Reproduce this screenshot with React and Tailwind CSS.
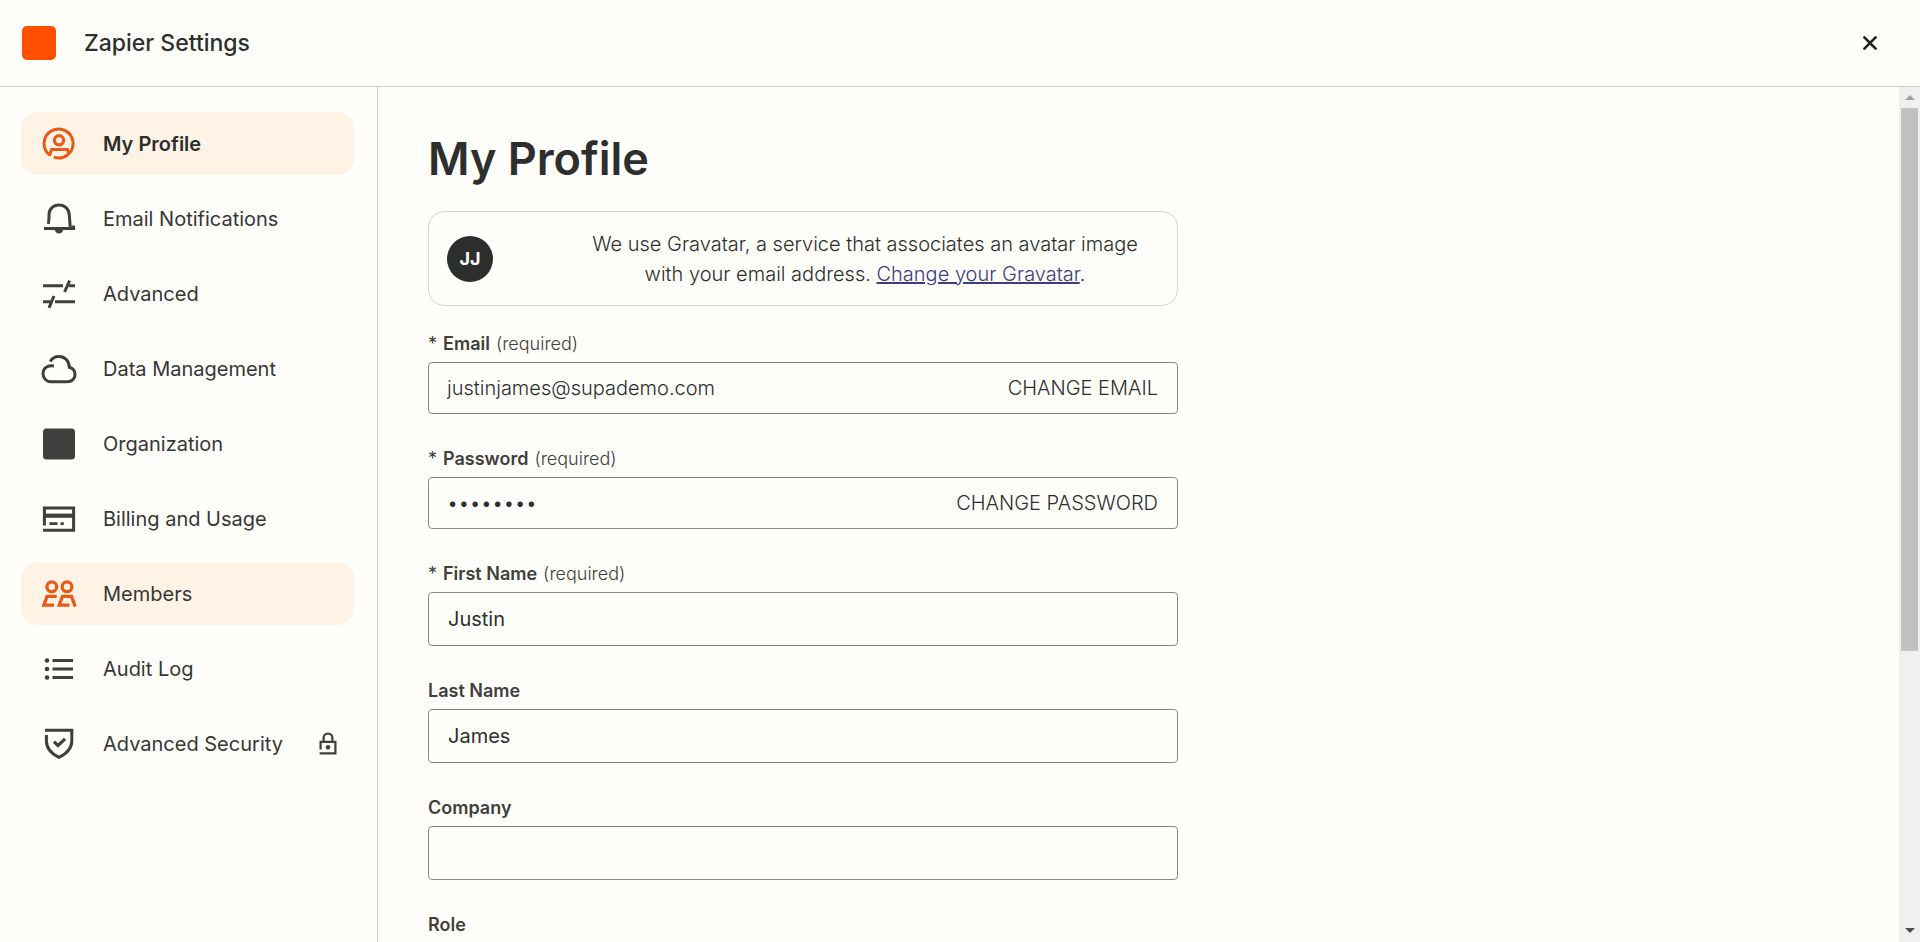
import { useState } from "react";

const ProfileIcon = () => (
  <>
    <path d="M9 29.2 A14.5 14.5 0 1 1 12.8 31.2" />
    <circle cx="18" cy="14.3" r="4.6" strokeWidth="3.2" />
    <path d="M8.4 29.8 L10.6 23.6 H26.4 L28 28" strokeWidth="3" />
  </>
);

const BellIcon = () => (
  <>
    <path d="M7.3 22.8 C8 20 8 16.5 8 13.5 C8 8 12.5 4 18 4 C23.5 4 28 8 28.2 13.5 L29.3 26.5" />
    <path d="M3 27.4 H32.6 V24.5" />
    <path d="M13.8 28 H22.2 C22.2 31 20.4 32.4 18 32.4 C15.6 32.4 13.8 31 13.8 28 Z" fill="currentColor" stroke="none" />
  </>
);

const SlidersIcon = () => (
  <path d="M2 9.8 H22 M28 9.8 H34 M23.6 16 L28.6 4.6 M2 25.7 H9.5 M14 25.7 H34 M8 31.8 L13 20" />
);

const CloudIcon = () => (
  <path d="M13 15 C8 14.2 2 16 2 22.8 C2 27.4 5.5 30.8 10 30.8 H26.4 C31 30.8 34 27.4 34 23.6 C34 20 31.6 17.2 28.4 16.3 C28 10 24 5.6 18 5.6 C14 5.6 11 7.4 9.2 10.6" />
);

const SquareIcon = () => (
  <rect x="2" y="2.5" width="32" height="31" rx="3.5" fill="currentColor" stroke="none" />
);

const CardIcon = () => (
  <>
    <path d="M3.4 24.5 V6.9 H32.6 V29.3 H2" />
    <path d="M3 14.7 H33" strokeWidth="4.2" />
    <path d="M8.5 22.6 H16.5 M19.6 22.6 H22.8" strokeWidth="2.8" />
  </>
);

const MembersIcon = () => (
  <g strokeWidth="3.3">
    <circle cx="10.8" cy="10.8" r="4.9" />
    <circle cx="26" cy="10.8" r="4.9" />
    <path d="M15.8 20.4 H6 L2.8 29.2 H13" />
    <path d="M28.4 29.2 H18.2 L21.4 20.4 H30.6 L34.2 30.6" />
  </g>
);

const ListIcon = () => (
  <>
    <path d="M11.5 9.5 H32 M11.5 18 H32 M11.5 26.5 H32" />
    <g fill="currentColor" stroke="none">
      <circle cx="6" cy="9.5" r="2.3" />
      <circle cx="6" cy="18" r="2.3" />
      <circle cx="6" cy="26.5" r="2.3" />
    </g>
  </>
);

const ShieldIcon = () => (
  <>
    <path d="M4 4.2 H30.8 V15 C30.8 23 25 28 18 31.4 C11 28 5.4 23 5.4 15 V9" />
    <path d="M13 15.6 L17 19.6 L24 12.8" strokeWidth="3.2" />
  </>
);

const LockIcon = () => (
  <svg viewBox="0 0 20 24" className="w-5 h-6 ml-auto text-[#403f3e]" fill="none" stroke="currentColor" strokeWidth="2.2" aria-hidden="true">
    <path d="M2.6 17.4 V9.8 H17.4 V21.4 H1.6" />
    <path d="M5.6 9.8 V6 A4.4 4.4 0 0 1 14.4 6 V9.8" />
    <circle cx="10" cy="15.2" r="2.2" fill="currentColor" stroke="none" />
  </svg>
);

const navItems = [
  { label: "My Profile", Icon: ProfileIcon, current: true, highlighted: true },
  { label: "Email Notifications", Icon: BellIcon },
  { label: "Advanced", Icon: SlidersIcon },
  { label: "Data Management", Icon: CloudIcon },
  { label: "Organization", Icon: SquareIcon },
  { label: "Billing and Usage", Icon: CardIcon },
  { label: "Members", Icon: MembersIcon, highlighted: true },
  { label: "Audit Log", Icon: ListIcon },
  { label: "Advanced Security", Icon: ShieldIcon, locked: true },
];

const NavItem = ({ label, Icon, current, highlighted, locked }) => (
  <li>
    <a
      href="#"
      aria-current={current ? "page" : undefined}
      className={`flex items-center h-[63px] pl-5 pr-4 rounded-2xl text-xl ${highlighted ? "bg-[#fff3e6]" : ""} ${current ? "font-semibold text-[#2d2e2e]" : "text-[#363636]"}`}
    >
      <svg
        viewBox="0 0 36 36"
        className={`w-9 h-9 mr-[26px] shrink-0 ${highlighted ? "text-[#e85a18]" : "text-[#403f3e]"}`}
        fill="none"
        stroke="currentColor"
        strokeWidth="3"
        aria-hidden="true"
      >
        <Icon />
      </svg>
      {label}
      {locked && <LockIcon />}
    </a>
  </li>
);

const Label = ({ htmlFor, required, children }) => (
  <label htmlFor={htmlFor} className="flex gap-[6px] mb-[6px] text-lg leading-6 text-[#403f3e]">
    {required && <span>*</span>}
    <span className="font-semibold">{children}</span>
    {required && <span className="font-light">(required)</span>}
  </label>
);

// Read-only value with an action on the right
const LockedField = ({ id, label, type, value, action }) => (
  <div>
    <Label htmlFor={id} required>{label}</Label>
    <div className="flex items-center h-[52px] pl-[18px] pr-[19px] border border-[#8b8a88] rounded text-xl font-light">
      <input id={id} type={type} value={value} readOnly className="flex-1 min-w-0 bg-transparent outline-none" />
      <button type="button" className="uppercase">{action}</button>
    </div>
  </div>
);

const TextField = ({ id, label, required, value, onChange }) => (
  <div>
    <Label htmlFor={id} required={required}>{label}</Label>
    <input
      id={id}
      type="text"
      value={value}
      onChange={onChange}
      className="block w-full h-[54px] px-[19px] bg-transparent border border-[#8b8a88] rounded text-xl outline-none"
    />
  </div>
);

const Scrollbar = () => (
  <div className="flex flex-col w-[21px] shrink-0 bg-[#f0f0f1]" aria-hidden="true">
    <div className="flex items-center justify-center h-[21px]">
      <svg viewBox="0 0 10 5" className="w-[10px] h-[5px]"><path d="M0 5 L5 0 L10 5 Z" fill="#a3a3a3" /></svg>
    </div>
    <div className="flex-1 px-[2px]">
      <div className="h-[67%] bg-[#c1c1c1]"></div>
    </div>
    <div className="flex items-center justify-center h-6">
      <svg viewBox="0 0 10 5" className="w-[10px] h-[5px]"><path d="M0 0 L5 5 L10 0 Z" fill="#505050" /></svg>
    </div>
  </div>
);

const App = () => {
  const [firstName, setFirstName] = useState("Justin");
  const [lastName, setLastName] = useState("James");
  const [company, setCompany] = useState("");

  return (
    <div className="flex flex-col h-screen overflow-hidden bg-[#fffefa] text-[#2d2e2e] font-['Inter',sans-serif]">
      <header className="flex items-center h-[87px] shrink-0 pl-[22px] pr-[39px] border-b border-[#cfcdcb]">
        <div className="w-[34px] h-[34px] rounded-[5px] bg-[#ff4f00]"></div>
        <span className="ml-7 text-[23px] leading-8 font-medium">Zapier Settings</span>
        <button type="button" aria-label="Close" className="ml-auto p-1">
          <svg viewBox="0 0 14 14" className="w-[14px] h-[14px]" fill="none" stroke="#1f1f1f" strokeWidth="2.6" strokeLinecap="round">
            <path d="M1.4 1.4 L12.6 12.6 M12.6 1.4 L1.4 12.6" />
          </svg>
        </button>
      </header>

      <div className="flex flex-1 min-h-0">
        <nav className="w-[378px] shrink-0 pt-[25px] pl-[21px] pr-[23px] border-r border-[#cfcdcb]">
          <ul className="flex flex-col gap-3">
            {navItems.map((item) => (
              <NavItem key={item.label} {...item} />
            ))}
          </ul>
        </nav>

        <main className="flex-1 min-w-0 overflow-hidden px-[50px] pt-11">
          <div className="max-w-[750px]">
            <h1 className="text-[45px] leading-[56px] font-semibold">My Profile</h1>

            <div className="flex items-center h-[95px] mt-6 mb-[26px] px-[18px] border border-[#d7d5d2] rounded-2xl">
              <div className="flex items-center justify-center w-[46px] h-[46px] shrink-0 rounded-full bg-[#2d2e2e] text-white text-lg font-bold">
                JJ
              </div>
              <p className="flex-1 pl-[94px] pr-4 text-center text-xl leading-[30px] font-light">
                We use Gravatar, a service that associates an avatar image with your email address.{" "}
                <a href="#" className="text-[#3d3d7a] underline">Change your Gravatar</a>.
              </p>
            </div>

            <form className="flex flex-col gap-[33px]">
              <LockedField id="email" label="Email" type="email" value="justinjames@supademo.com" action="Change email" />
              <LockedField id="password" label="Password" type="password" value="password" action="Change password" />
              <TextField id="first-name" label="First Name" required value={firstName} onChange={(e) => setFirstName(e.target.value)} />
              <TextField id="last-name" label="Last Name" value={lastName} onChange={(e) => setLastName(e.target.value)} />
              <TextField id="company" label="Company" value={company} onChange={(e) => setCompany(e.target.value)} />
              <div>
                <Label htmlFor="role">Role</Label>
                <select id="role" className="block w-full h-[54px] px-[19px] border border-[#8b8a88] rounded text-xl"></select>
              </div>
            </form>
          </div>
        </main>
        <Scrollbar />
      </div>
    </div>
  );
};

export default App;
